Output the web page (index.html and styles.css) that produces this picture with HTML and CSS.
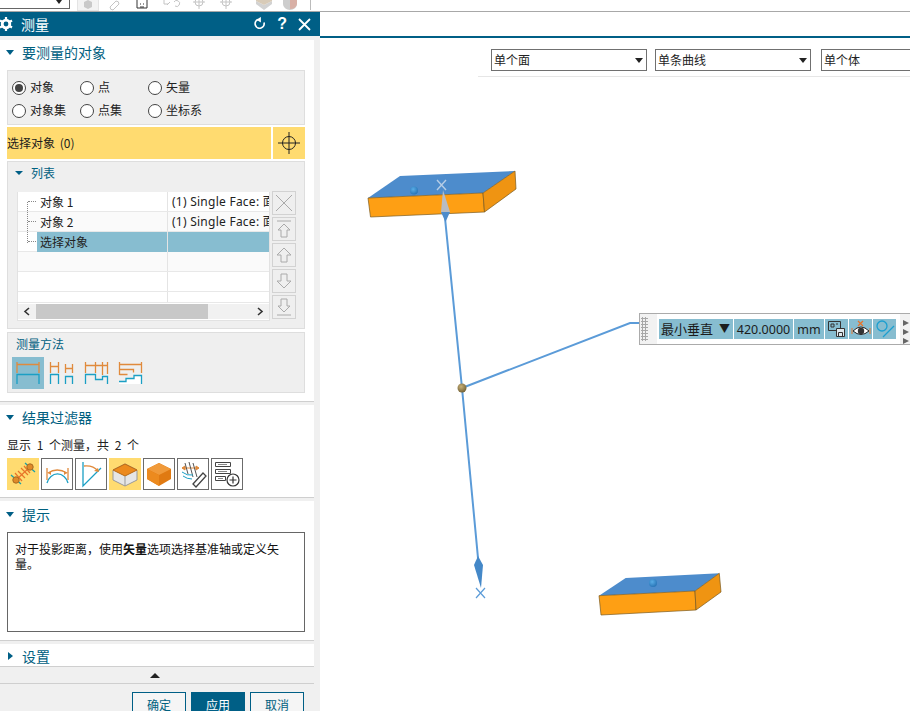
FILE: index.html
```html
<!DOCTYPE html>
<html lang="zh">
<head>
<meta charset="utf-8">
<title>测量</title>
<link rel="stylesheet" href="styles.css">
</head>
<body>
<div class="app">
  <header class="topbar">
    <div class="top-select"><svg class="top-select-arrow" width="8" height="5" viewBox="0 0 8 5"><path d="M1 0h6L4 4z" fill="#222"/></svg></div>
    <div class="top-tools">
      <span class="tool tool-box"><svg width="22" height="11" viewBox="0 0 22 11"><path d="M7 2l4-2 4 2v5l-4 2-4-2z" fill="#c9c9c9"/></svg></span>
      <svg class="tool" width="22" height="11" viewBox="0 0 22 11"><path d="M6 7l6-6a3 3 0 0 1 3 3l-6 6a3 3 0 0 1-3-3z" fill="none" stroke="#c4c4c4"/></svg>
      <svg class="tool" width="22" height="11" viewBox="0 0 22 11"><path d="M6 0v8h10V0M9 4h1M12 4h1M9 7h4" fill="none" stroke="#333"/></svg>
      <svg class="tool tool-gap" width="22" height="11" viewBox="0 0 22 11"><path d="M3 0v4h4M6 5l3-3M13 2a3 3 0 1 1 1 4" fill="none" stroke="#c4c4c4"/></svg>
      <svg class="tool" width="22" height="11" viewBox="0 0 22 11"><circle cx="11" cy="2" r="4" fill="none" stroke="#c4c4c4"/><path d="M5 2h12M11 0v9" stroke="#c4c4c4"/></svg>
      <svg class="tool" width="22" height="11" viewBox="0 0 22 11"><circle cx="11" cy="2" r="4" fill="none" stroke="#c4c4c4"/><path d="M5 2h12M11 0v9" stroke="#c4c4c4"/></svg>
      <svg class="tool tool-gap2" width="22" height="11" viewBox="0 0 22 11"><path d="M3 1l8 4 8-4v3l-8 6-8-6z" fill="#d2d2d2"/><path d="M3 0h16v1l-8 4-8-4z" fill="#d8cbb8"/></svg>
      <svg class="tool" width="22" height="11" viewBox="0 0 22 11"><path d="M4 0h14v4a7 6 0 0 1-14 0z" fill="#cdcdcd"/><path d="M11 0h7v4a7 6 0 0 1-7 5z" fill="#d8b0a6"/></svg>
      <span class="tool-sep"></span>
    </div>
  </header>

  <div class="main">
    <aside class="panel">
      <div class="panel-title">
        <svg class="gear" width="14" height="14" viewBox="0 0 14 14"><circle cx="6" cy="7" r="3.800" fill="none" stroke="#fff" stroke-width="2.800"/><path d="M6 0v3M6 11v3M0 3.500l2.500 1.500M0 10.500L2.500 9M12 3.500L9.500 5M12 10.500L9.500 9" stroke="#fff" stroke-width="2.200"/></svg>
        <span class="panel-name">测量</span>
        <span class="title-actions">
          <svg width="14" height="14" viewBox="0 0 14 14"><path d="M6 2.500a4.500 4.500 0 1 0 6 3" fill="none" stroke="#fff" stroke-width="1.700"/><path d="M4.500 0v5.500L9 2.700z" fill="#fff" transform="rotate(180 6.700 2.700)"/></svg>
          <span class="help">?</span>
          <svg width="13" height="13" viewBox="0 0 13 13"><path d="M1 1l11 11M12 1L1 12" stroke="#fff" stroke-width="1.800"/></svg>
        </span>
      </div>

      <div class="sections">
        <section class="section section-first">
          <h2 class="sec-head"><span class="tri-down"></span>要测量的对象</h2>
          <div class="group radios">
            <label class="radio"><i class="dot on"></i>对象</label>
            <label class="radio"><i class="dot"></i>点</label>
            <label class="radio"><i class="dot"></i>矢量</label>
            <label class="radio"><i class="dot"></i>对象集</label>
            <label class="radio"><i class="dot"></i>点集</label>
            <label class="radio"><i class="dot"></i>坐标系</label>
          </div>
          <div class="select-row">
            <div class="select-label">选择对象 (0)</div>
            <div class="select-btn"><svg width="22" height="22" viewBox="0 0 22 22"><circle cx="11" cy="11" r="6.500" fill="none" stroke="#222"/><path d="M0 11h22M11 0v22" stroke="#222"/></svg></div>
          </div>
          <div class="group list-group">
            <div class="sub-head"><span class="tri-down small"></span>列表</div>
            <div class="list-body">
              <div class="table">
                <div class="tree-line"></div>
                <div class="row"><div class="c1"><i class="dash"></i>对象 1</div><div class="c2">(1) Single Face: 面</div></div>
                <div class="row alt"><div class="c1"><i class="dash"></i>对象 2</div><div class="c2">(1) Single Face: 面</div></div>
                <div class="row sel"><div class="c1"><i class="dash"></i><span>选择对象</span></div><div class="c2"></div></div>
                <div class="row alt"><div class="c1"></div><div class="c2"></div></div>
                <div class="row"><div class="c1"></div><div class="c2"></div></div>
                <div class="row short"><div class="c1"></div><div class="c2"></div></div>
                <div class="hscroll">
                  <svg width="18" height="15" viewBox="0 0 18 15"><path d="M11 4L7 7.500l4 3.500" fill="none" stroke="#333" stroke-width="1.600"/></svg>
                  <div class="thumb"></div>
                  <svg class="hs-right" width="18" height="15" viewBox="0 0 18 15"><path d="M7 4l4 3.500L7 11" fill="none" stroke="#333" stroke-width="1.600"/></svg>
                </div>
              </div>
              <div class="side-btns">
                <span class="side"><svg width="22" height="22" viewBox="0 0 22 22"><path d="M3 3l16 16M19 3L3 19" stroke="#aaa"/></svg></span>
                <span class="side"><svg width="22" height="22" viewBox="0 0 22 22"><path d="M4 3h14M11 6l-6 6h3v7h6v-7h3z" fill="none" stroke="#aaa"/></svg></span>
                <span class="side"><svg width="22" height="22" viewBox="0 0 22 22"><path d="M11 4l-7 7h4v7h6v-7h4z" fill="none" stroke="#aaa"/></svg></span>
                <span class="side"><svg width="22" height="22" viewBox="0 0 22 22"><path d="M11 18l-7-7h4V4h6v7h4z" fill="none" stroke="#aaa"/></svg></span>
                <span class="side"><svg width="22" height="22" viewBox="0 0 22 22"><path d="M4 19h14M11 16l-6-6h3V3h6v7h3z" fill="none" stroke="#aaa"/></svg></span>
              </div>
            </div>
          </div>
          <div class="group method-group">
            <div class="method-title">测量方法</div>
            <div class="method-icons">
              <span class="mtile on"><svg width="32" height="32" viewBox="0 0 32 32"><g fill="none" stroke-width="1.300"><path d="M5 5v11M27 5v11M5 7.500h22" stroke="#e08a3c"/><path d="M5 27V17.500h22V27" stroke="#1b9fc4"/></g></svg></span>
              <span class="mtile"><svg width="32" height="32" viewBox="0 0 32 32"><g fill="none" stroke-width="1.300"><path d="M4.500 5v11M12.500 5v11M4.500 9.500h8M19.500 7v9M26.500 7v9M19.500 11.500h7" stroke="#e08a3c"/><path d="M4.500 27V17.500h8V27M19.500 27V19.500h7V27" stroke="#1b9fc4"/></g></svg></span>
              <span class="mtile"><svg width="32" height="32" viewBox="0 0 32 32"><g fill="none" stroke-width="1.300"><path d="M5.500 5v11M15.500 5v11M22.500 5v13M27.500 5v12M5.500 8.500h22" stroke="#e08a3c"/><path d="M5.500 27V17.500h10v5h7v-3h5V27" stroke="#1b9fc4"/></g></svg></span>
              <span class="mtile"><svg width="32" height="32" viewBox="0 0 32 32"><path d="M5 27v-3h7v-3h8v-3h7v9z" fill="#fff"/><g fill="none" stroke-width="1.300"><path d="M5.500 5v13M27.500 5v11M5.500 7.500h22M5.500 12.500h14v3M5.500 17.500h8" stroke="#e08a3c"/><path d="M5 24.500h7v-3h8v-3h7.500V27" stroke="#1b9fc4"/></g></svg></span>
            </div>
          </div>
        </section>

        <div class="divider"></div>

        <section class="section">
          <h2 class="sec-head short up"><span class="tri-down"></span>结果过滤器</h2>
          <div class="result-count">显示 1 个测量，共 2 个</div>
          <div class="filter-icons">
            <span class="ftile on"><svg width="32" height="32" viewBox="0 0 32 32"><path d="M4 17l10 9M18 5l10 9" stroke="#1b9fa8" stroke-width="1.300" fill="none"/><path d="M9 22L23 9M11 13l7 7M14 10l7 7M8 15l7 8M17 8l6 7" stroke="#e8742a" stroke-width="1.200" fill="none"/><circle cx="9" cy="22" r="3.200" fill="#e08a28" stroke="#a96a20"/><circle cx="23" cy="9" r="3.200" fill="#e08a28" stroke="#a96a20"/></svg></span>
            <span class="ftile"><svg width="30" height="30" viewBox="0 0 30 30"><path d="M5 24a11 13 0 0 1 21 0" fill="none" stroke="#1b9fc4" stroke-width="1.300"/><path d="M5 9v12M26 9v12M6 14q9-6 19 0" fill="none" stroke="#e08a3c" stroke-width="1.300"/><path d="M6 14l3-2v4zM25 14l-3-2v4z" fill="#e08a3c"/></svg></span>
            <span class="ftile"><svg width="30" height="30" viewBox="0 0 30 30"><path d="M7 3v24L25 9" fill="none" stroke="#1b9fc4" stroke-width="1.300"/><path d="M8 7q9-1 14 5" fill="none" stroke="#e08a3c" stroke-width="1.300"/><path d="M23 13l-5-1 4-3z" fill="#e08a3c"/></svg></span>
            <span class="ftile on"><svg width="32" height="32" viewBox="0 0 32 32"><path d="M16 6l12 6v10l-12 6-12-6V12z" fill="#e6e6e6" stroke="#999"/><path d="M16 6l12 6-12 6-12-6z" fill="#ec8a1e" stroke="#b96a14"/><path d="M16 18v10" stroke="#999"/></svg></span>
            <span class="ftile"><svg width="30" height="30" viewBox="0 0 30 30"><path d="M15 4l12 6v10l-12 7-12-7V10z" fill="#e07a12"/><path d="M15 4l12 6-12 6-12-6z" fill="#f09a3a"/><path d="M15 16v11L3 20V10z" fill="#ec8a1e"/></svg></span>
            <span class="ftile"><svg width="30" height="30" viewBox="0 0 30 30"><path d="M4 9h17M4 9l3-2v4zM21 9l-3-2v4z" fill="#e08a3c" stroke="#e08a3c"/><path d="M7 4l3 11M11 3l4 15M15 4l4 14" stroke="#555" fill="none"/><path d="M4 13q5 4 11 3M5 17q4 3 9 3" stroke="#1b9fc4" fill="none"/><path d="M15 25l10-11 3 3-10 11z" fill="#fff" stroke="#444" stroke-width="1.300"/></svg></span>
            <span class="ftile"><svg width="30" height="30" viewBox="0 0 30 30"><path d="M3.500 3.500h15v4h-15zM3.500 10.500h15v4h-15zM3.500 17.500h10v4h-10z" fill="#fff" stroke="#444"/><path d="M6 5.500h9M6 12.500h9M6 19.500h5" stroke="#888"/><circle cx="21" cy="21" r="6" fill="#fff" stroke="#333" stroke-width="1.200"/><path d="M17.500 21h7M21 17.500v7" stroke="#333" stroke-width="1.200"/></svg></span>
          </div>
        </section>

        <div class="divider div-b"></div>

        <section class="section">
          <h2 class="sec-head short"><span class="tri-down"></span>提示</h2>
          <div class="hint">对于投影距离，使用<b>矢量</b>选项选择基准轴或定义矢量。</div>
        </section>

        <div class="divider div-c"></div>

        <section class="section">
          <h2 class="sec-head settings"><span class="tri-right"></span>设置</h2>
        </section>
      </div>

      <div class="collapse-row"><span class="tri-up"></span></div>
      <div class="footer">
        <button class="btn">确定</button>
        <button class="btn primary">应用</button>
        <button class="btn">取消</button>
      </div>
    </aside>

    <main class="viewport">
      <div class="vp-strip"></div>
      <div class="filters">
        <div class="dd">单个面<svg width="8" height="5" viewBox="0 0 8 5"><path d="M0 0h8L4 5z" fill="#222"/></svg></div>
        <div class="dd">单条曲线<svg width="8" height="5" viewBox="0 0 8 5"><path d="M0 0h8L4 5z" fill="#222"/></svg></div>
        <div class="dd dd-last">单个体</div>
      </div>

      <svg class="scene" width="590" height="673" viewBox="320 38 590 673">
        <defs>
          <radialGradient id="ball" cx="40%" cy="35%" r="70%"><stop offset="0" stop-color="#58ace6"/><stop offset="1" stop-color="#2672b4"/></radialGradient>
          <radialGradient id="node" cx="40%" cy="35%" r="70%"><stop offset="0" stop-color="#c8b078"/><stop offset="1" stop-color="#6f5e32"/></radialGradient>
        </defs>
        <path d="M445 218L462 388L478 558" fill="none" stroke="#5b9bd8" stroke-width="2"/>
        <path d="M462 388L630 323H640" fill="none" stroke="#5b9bd8" stroke-width="2"/>

        <path d="M368 198L400 176L515 171L483 193z" fill="#4d8ccc"/>
        <path d="M368 198L483 193L484.500 212L370.500 217z" fill="#fe9f14" stroke="#7a5a20" stroke-width=".7"/>
        <path d="M483 193L515 171L516 189L484.500 212z" fill="#ef9412" stroke="#7a5a20" stroke-width=".7"/>
        <circle cx="414" cy="190.500" r="4" fill="url(#ball)"/>
        <path d="M443 190L450 212L445 218L441 212z" fill="#b9bcc2"/>
        <path d="M441 212L450 212L445.500 222z" fill="#4d8ccc"/>
        <path d="M437 180l9 10M446 180l-9 10" stroke="#b6cde6" stroke-width="1.400"/>

        <path d="M599 595.700L625.700 578L719.300 573.300L695 591z" fill="#4d8ccc"/>
        <path d="M599 595.700L695 591L696 610L601 615z" fill="#fe9f14" stroke="#7a5a20" stroke-width=".7"/>
        <path d="M695 591L719.300 573.300L721 592L696 610z" fill="#ef9412" stroke="#7a5a20" stroke-width=".7"/>
        <circle cx="653" cy="583" r="4" fill="url(#ball)"/>

        <path d="M478 556L483 565L481 588L474 565z" fill="#4488c8"/>
        <path d="M476 588l9 10M485 588l-9 10" stroke="#5b9bd8" stroke-width="1.200"/>
        <circle cx="462" cy="388" r="4.500" fill="url(#node)"/>
      </svg>

      <div class="tag">
        <div class="grip"></div>
        <div class="tag-inner">
          <div class="tag-cell tag-name">最小垂直<span class="tag-caret">▼</span></div>
          <div class="tag-cell tag-val">420.0000</div>
          <div class="tag-cell tag-unit">mm</div>
          <div class="tag-cell tag-ico"><svg width="20" height="18" viewBox="0 0 20 18"><path d="M1.500 1.500h12v9h-12z" fill="none" stroke="#333"/><path d="M4 4h3v3H4zM9 4h2" fill="none" stroke="#333"/><path d="M9.500 8.500h8v8h-8z" fill="#dfe9ee" stroke="#333"/><path d="M11.500 12.500h4v4h-4z" fill="none" stroke="#333"/></svg></div>
          <div class="tag-cell tag-ico"><svg width="20" height="18" viewBox="0 0 20 18"><path d="M2 11q8-8 16 0q-8 7-16 0z" fill="#fff" stroke="#222"/><circle cx="10" cy="11" r="3.200" fill="#333"/><path d="M7 1l5 5M12 1L7 6" stroke="#e8742a" stroke-width="1.300"/><path d="M1 8v6M19 8v6" stroke="#e8742a"/></svg></div>
          <div class="tag-cell tag-ico"><svg width="20" height="18" viewBox="0 0 20 18"><circle cx="7" cy="6" r="5" fill="none" stroke="#1b9fd0" stroke-width="1.300"/><path d="M8 17L19 6" stroke="#1b9fd0" stroke-width="1.300"/></svg></div>
        </div>
        <div class="tag-more"><i></i><i></i><i></i></div>
      </div>
    </main>
  </div>
</div>
</body>
</html>
```
FILE: styles.css
```css
* { box-sizing: border-box; }
html, body { margin: 0; height: 100%; }
body {
  overflow: hidden;
  background: #fff;
  color: #1c1c1c;
  font: 12px/1.2 "Noto Sans CJK SC", "Noto Sans", sans-serif;
}
.app { width: 910px; height: 711px; display: flex; flex-direction: column; overflow: hidden; }

/* top toolbar */
.topbar { height: 12px; flex: none; display: flex; border-bottom: 1px solid #a8a8a8; background: #fff; overflow: hidden; }
.top-select { width: 70px; height: 9px; border: 1px solid #666; border-width: 0 1px 1px 0; display: flex; justify-content: flex-end; padding: 0 6px 0 0; }
.top-select-arrow { display: block; }
.top-tools { display: flex; margin-left: 7px; height: 11px; align-items: flex-start; }
.tool { display: block; width: 22px; height: 11px; margin-right: 5px; flex: none; }
.tool-box { background: #f3f3f3; border: 1px solid #e4e4e4; border-top: 0; }
.tool-box svg { display: block; margin-left: -1px; }
.tool-gap { margin-left: 3px; }
.tool-gap2 { margin-left: 11px; margin-right: 4px; }
.tool-sep { width: 1px; height: 10px; background: #bbb; margin-left: 4px; }

.main { flex: 1; display: flex; min-height: 0; }

/* dialog panel */
.panel { width: 320px; flex: none; display: flex; flex-direction: column; background: #f0f0f0; overflow: hidden; }
.panel-title { height: 24px; flex: none; display: flex; align-items: center; background: #005f86; color: #fff; }
.gear { margin-left: 0; flex: none; }
.panel-name { margin-left: 7px; font-size: 14px; }
.title-actions { margin-left: auto; display: flex; align-items: center; gap: 11px; padding-right: 9px; }
.title-actions svg { display: block; }
.help { font: bold 16px/1 "Liberation Sans", sans-serif; }

.sections { width: 314px; margin-top: 4px; background: #fff; flex: none; }
.section { background: #fff; }
.sec-head { margin: 0; display: flex; align-items: center; height: 26px; padding-left: 6px; font-size: 14px; font-weight: 400; color: #00607f; }
.section-first .sec-head { height: 30px; padding-bottom: 6px; }
.sec-head.short { height: 26px; }
.sec-head.up { padding-bottom: 2px; }
.sec-head.settings { height: 22px; padding-top: 2px; }
.tri-down { width: 0; height: 0; border: 4.500px solid transparent; border-top: 5px solid #005f86; border-bottom: 0; margin-right: 8px; }
.tri-down.small { border-width: 4px 4px 0; margin-right: 8px; }
.tri-right { width: 0; height: 0; border: 4.500px solid transparent; border-left: 5px solid #005f86; border-right: 0; margin: 0 9px 0 2px; }
.tri-up { display: block; width: 0; height: 0; border: 5px solid transparent; border-bottom: 5px solid #222; border-top: 0; }

.group { width: 298px; margin-left: 7px; background: #efefef; border: 1px solid #dedede; }
.radios { height: 55px; display: grid; grid-template-columns: 68px 68px 1fr; grid-auto-rows: 23px; padding: 5px 0 0 4px; }
.radio { display: flex; align-items: center; gap: 4px; color: #222; }
.dot { width: 14px; height: 14px; border: 1px solid #444; border-radius: 50%; background: #fff; flex: none; display: flex; align-items: center; justify-content: center; }
.dot.on::after { content: ""; width: 8px; height: 8px; border-radius: 50%; background: #444; }

.select-row { margin: 2px 0 0 7px; width: 298px; height: 32px; display: flex; gap: 2px; }
.select-label { flex: 1; background: #ffdb70; display: flex; align-items: center; word-spacing: 2px; }
.select-btn { width: 32px; background: #ffdb70; display: flex; align-items: center; justify-content: center; }

.list-group { margin-top: 2px; height: 168px; }
.sub-head { height: 22px; display: flex; align-items: center; padding-left: 7px; color: #00607f; }
.list-body { display: flex; margin: 8px 0 0 9px; }
.table { position: relative; width: 253px; height: 129px; background: #fff; border: 1px solid #e2e2e2; border-top: 0; overflow: hidden; }
.row { display: flex; height: 20px; border-bottom: 1px solid #e8e8e8; line-height: 19px; }
.row.alt { background: #fafafa; }
.row.short { height: 11px; }
.c1 { width: 150px; flex: none; padding-left: 22px; border-right: 1px solid #e4e4e4; display: flex; align-items: center; position: relative; color: #222; }
.c2 { flex: 1; min-width: 0; padding-left: 4px; white-space: nowrap; overflow: hidden; font-family: "Noto Sans", "Noto Sans CJK SC", sans-serif; color: #222; letter-spacing: .25px; }
.row.sel .c1::before { content: ""; position: absolute; left: 19px; right: 0; top: 0; bottom: -1px; background: #87bdd0; }
.row.sel .c1 span { position: relative; }
.row.sel .c2 { background: #87bdd0; margin-bottom: -1px; }
.tree-line { position: absolute; left: 9px; top: 10px; height: 41px; border-left: 1px dotted #888; z-index: 1; }
.dash { position: absolute; left: 10px; top: 9px; width: 8px; border-top: 1px dotted #888; }
.hscroll { position: absolute; left: 0; right: 0; bottom: 1px; height: 15px; display: flex; align-items: center; background: #f1f1f1; }
.hscroll svg { flex: none; }
.thumb { width: 172px; height: 15px; background: #c8c8c8; }
.hs-right { margin-left: auto; }
.side-btns { display: flex; flex-direction: column; gap: 2px; margin: -1px 0 0 2px; }
.side { width: 24px; height: 24px; border: 1px solid #d2d2d2; display: flex; align-items: center; justify-content: center; }

.method-group { margin-top: 3px; height: 61px; padding: 2px 0 0 4px; }
.method-title { color: #00607f; height: 20px; line-height: 18px; padding-left: 4px; }
.method-icons { display: flex; gap: 2px; margin-top: 2px; }
.mtile { width: 32px; height: 32px; display: block; }
.mtile svg { display: block; }
.mtile.on { background: #87bdd0; }

.divider { height: 4px; background: #f0f0f0; border-top: 1px solid #cfcfcf; margin-top: 8px; width: 314px; }
.div-b { margin-top: 7px; }
.div-c { margin-top: 8px; }

.result-count { margin: 3px 0 0 7px; height: 22px; line-height: 22px; color: #222; word-spacing: 3px; }
.filter-icons { display: flex; gap: 2px; margin: 2px 0 0 7px; }
.ftile { width: 32px; height: 32px; border: 1px solid #6b6b6b; background: #fff; display: block; }
.ftile svg { display: block; }
.ftile.on { border: 0; background: #ffdb70; }

.hint { width: 298px; height: 100px; margin: 5px 0 0 7px; padding: 8px 7px; border: 1px solid #666; background: #fff; line-height: 15px; color: #111; }
.hint b { font-weight: 700; }

.collapse-row { height: 18px; flex: none; width: 314px; padding-right: 4px; border-top: 1px solid #cfcfcf; border-bottom: 1px solid #cfcfcf; display: flex; align-items: center; justify-content: center; background: #f0f0f0; }
.footer { display: flex; gap: 5px; padding: 8px 0 0 132px; background: #f0f0f0; }
.btn { width: 54px; height: 30px; flex: none; border: 1px solid #005f86; background: #f5f5f5; color: #00607f; font: 12px/1.2 "Noto Sans CJK SC", sans-serif; padding: 0 0 4px; display: block; text-align: center; }
.btn.primary { background: #005f86; color: #fff; }

/* graphics viewport */
.viewport { flex: 1; position: relative; min-width: 0; background: #fff; }
.vp-strip { height: 26px; border-bottom: 2px solid #005f86; }
.filters { margin: 11px 0 0 158px; padding: 0 0 6px 13px; height: 28px; display: flex; gap: 8px; border-bottom: 1px solid #e6e6e6; position: relative; z-index: 1; }
.dd { width: 156px; height: 22px; flex: none; border: 1px solid #707070; background: #fff; display: flex; align-items: center; justify-content: space-between; padding: 0 3px 0 2px; color: #222; }
.dd-last { margin-left: 2px; }
.scene { position: absolute; left: 0; top: 26px; display: block; }

.tag { position: absolute; left: 319px; top: 301px; width: 275px; height: 32px; display: flex; background: #f2f2f2; border: 1px solid #ababab; border-right: 0; }
.grip { width: 7px; flex: none; margin: 3px 9px 3px 1px; background-image: radial-gradient(#a8a8a8 1px, transparent 1.200px); background-size: 3px 3px; }
.tag-inner { display: flex; align-items: center; gap: 1px; background: #fff; padding: 5px 2px; width: 243px; flex: none; }
.tag-cell { height: 20px; background: #87bdd0; display: flex; align-items: center; flex: none; color: #1c1c1c; font-size: 13px; }
.tag-name { width: 74px; padding-left: 2px; justify-content: space-between; padding-right: 3px; }
.tag-caret { font-size: 11px; }
.tag-val { width: 59px; justify-content: center; font-family: "Noto Sans", sans-serif; font-size: 12.500px; }
.tag-unit { width: 30px; justify-content: center; font-family: "Noto Sans", sans-serif; font-size: 12.500px; }
.tag-ico { width: 23px; justify-content: center; }
.tag-more { flex: 1; display: flex; flex-direction: column; gap: 3px; padding: 6px 0 0 3px; }
.tag-more i { display: block; width: 0; height: 0; border: 3px solid transparent; border-left: 6px solid #666; border-right: 0; }
```
